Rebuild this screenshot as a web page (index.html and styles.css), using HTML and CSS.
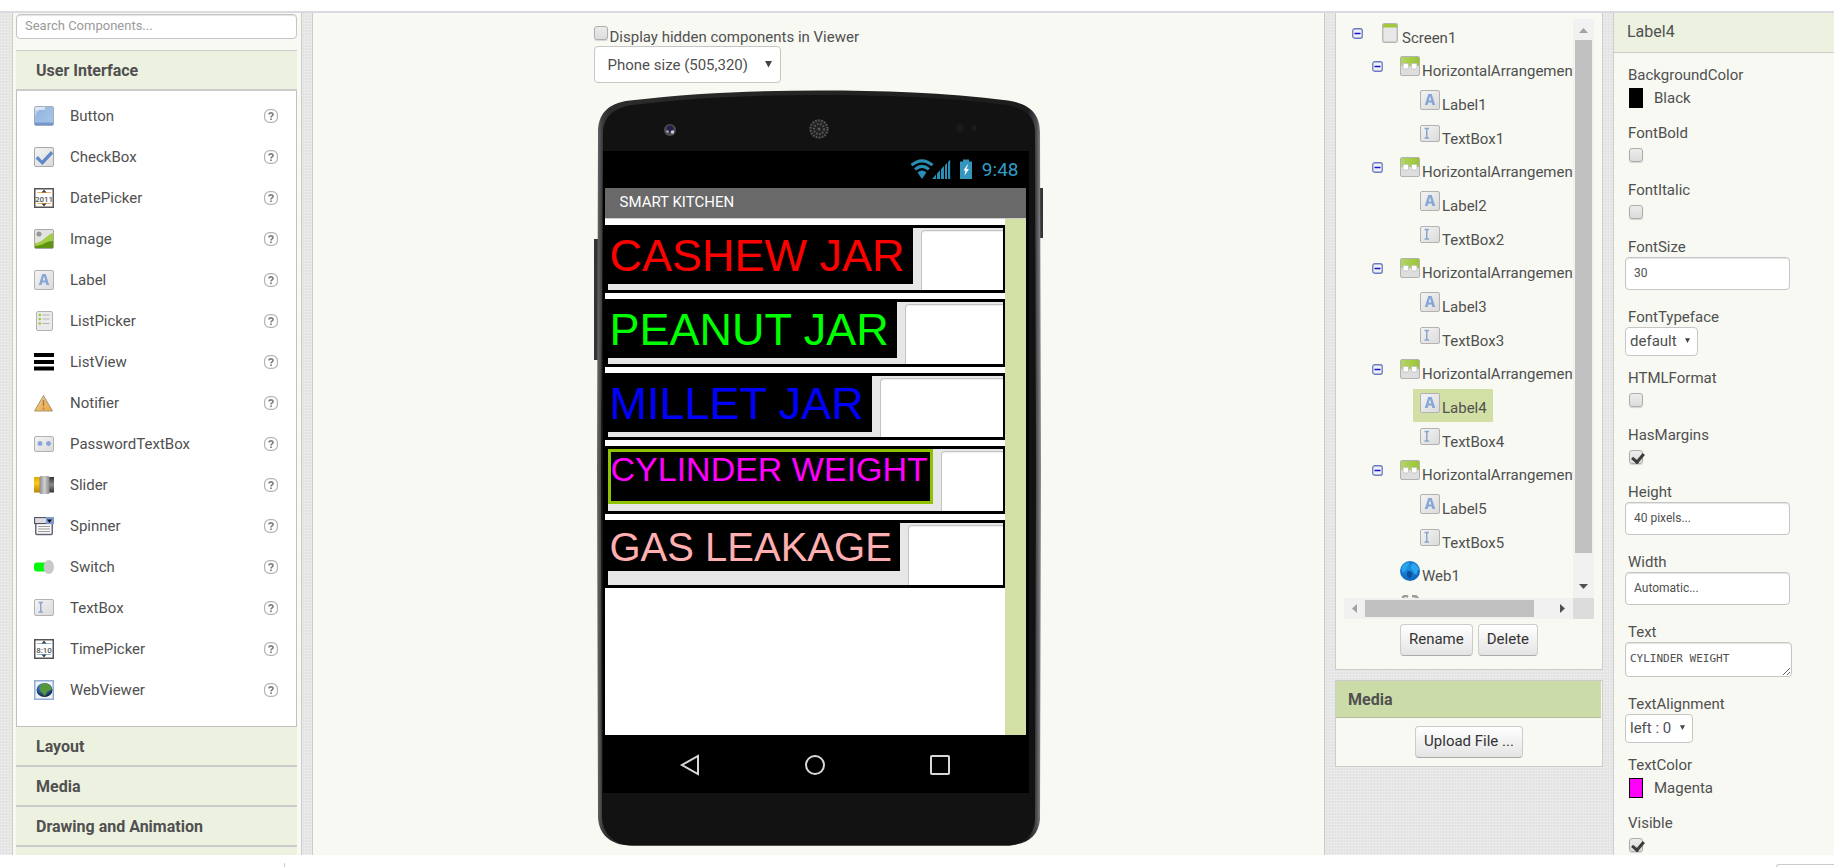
FILE: index.html
```html
<!DOCTYPE html>
<html lang="en">
<head>
<meta charset="utf-8">
<title>Designer</title>
<link rel="stylesheet" href="styles.css">
</head>
<body>
<svg class="sprite" width="0" height="0" aria-hidden="true">
  <defs>
    <linearGradient id="gBlue" x1="0" y1="0" x2="1" y2="1"><stop offset="0" stop-color="#8fb0dc"/><stop offset=".5" stop-color="#9dbde4"/><stop offset="1" stop-color="#a9c5e8"/></linearGradient>
    <linearGradient id="gGrey" x1="0" y1="0" x2="1" y2="1"><stop offset="0" stop-color="#f4f4f4"/><stop offset="1" stop-color="#dadada"/></linearGradient>
    <linearGradient id="gGreen" x1="0" y1="0" x2="1" y2="0"><stop offset="0" stop-color="#b2d566"/><stop offset="1" stop-color="#9cc434"/></linearGradient>
    <linearGradient id="gWarn" x1="0" y1="0" x2="1" y2="1"><stop offset="0" stop-color="#e8d29a"/><stop offset="1" stop-color="#f0a23a"/></linearGradient>
    <linearGradient id="gYellow" x1="0" y1="0" x2="0" y2="1"><stop offset="0" stop-color="#e0a800"/><stop offset=".4" stop-color="#ffc81e"/><stop offset="1" stop-color="#b88600"/></linearGradient>
    <linearGradient id="gKnob" x1="0" y1="0" x2="1" y2="0"><stop offset="0" stop-color="#8c8c8c"/><stop offset=".5" stop-color="#cfcfcf"/><stop offset="1" stop-color="#888"/></linearGradient>
    <linearGradient id="gDark" x1="0" y1="0" x2="0" y2="1"><stop offset="0" stop-color="#333"/><stop offset=".5" stop-color="#8a8a8a"/><stop offset="1" stop-color="#333"/></linearGradient>
    <radialGradient id="gWorld" cx=".45" cy=".3" r=".7"><stop offset="0" stop-color="#6aa0dc"/><stop offset=".6" stop-color="#2c5a94"/><stop offset="1" stop-color="#0c1c30"/></radialGradient>
    <radialGradient id="gWeb" cx=".4" cy=".35" r=".7"><stop offset="0" stop-color="#1f92e2"/><stop offset="1" stop-color="#0a62ba"/></radialGradient>
    <linearGradient id="gEdge" x1="0" y1="0" x2="1" y2="0"><stop offset="0" stop-color="#6a6c6e"/><stop offset=".012" stop-color="#3a3b3d"/><stop offset=".03" stop-color="#2b2b2c"/><stop offset=".97" stop-color="#1c1c1d"/><stop offset=".99" stop-color="#4a4b4d"/><stop offset="1" stop-color="#8a8c8e"/></linearGradient>
  </defs>
  <symbol id="i-button" viewBox="0 0 20 20"><rect x=".5" y=".5" width="19" height="19" rx="1.5" fill="url(#gBlue)" stroke="#a3aebd"/><path d="M1 11C2 6 6 2 14 1H1z" fill="#c3d6ef"/><path d="M1 1h10v3H1z" fill="#e6eefa" opacity=".7"/><path d="M1 16.500h18V19H1z" fill="#7397cd"/></symbol>
  <symbol id="i-checkbox" viewBox="0 0 20 20"><rect x=".5" y=".5" width="19" height="19" rx="1.500" fill="url(#gGrey)" stroke="#a9a9a9"/><path d="M1.500 11.500L4 9l4 4.500L17 4l2.200 2.500L8.500 18z" fill="#5f88c6"/></symbol>
  <symbol id="i-picker" viewBox="0 0 20 20"><rect x=".75" y=".75" width="18.500" height="18.500" fill="#fff" stroke="#555" stroke-width="1.500"/><path d="M3 4.500h14M3 15.500h14" stroke="currentColor" stroke-width="1.200"/><path d="M7.500 4.500l2.500-3 2.500 3zM7.500 15.500l2.500 3 2.500-3z" fill="#444"/></symbol>
  <symbol id="i-image" viewBox="0 0 20 20"><rect x=".5" y=".5" width="19" height="19" rx="1.500" fill="#e2e2e2" stroke="#a9a9a9"/><circle cx="5" cy="5" r="2.500" fill="#969696"/><path d="M1 14c7 0 10-7 18-10v15H1z" fill="#a4cc45"/><path d="M1 17c7 0 11-5 18-5v7H1z" fill="#5f9413"/></symbol>
  <symbol id="i-label" viewBox="0 0 20 20"><rect x=".5" y=".5" width="19" height="19" rx="1.500" fill="url(#gGrey)" stroke="#b2b2b2"/><path d="M4.800 15L8.300 4h3.400L15.200 15h-2.800l-.7-2.500H8.300L7.600 15zM8.700 10.500h2.600L10 6z" fill="#85a6d6" fill-rule="evenodd"/></symbol>
  <symbol id="i-listpicker" viewBox="0 0 20 20"><rect x="2.500" y=".5" width="16" height="19" rx="1.500" fill="#eaeaea" stroke="#b2b2b2"/><path d="M8.500 4h7M8.500 8h7M8.500 12.500h7" stroke="#b5b5b5" stroke-width="1.200"/><circle cx="5.800" cy="4" r="1.300" fill="#9cc93c"/><circle cx="5.800" cy="8" r="1.300" fill="#9cc93c"/><circle cx="5.800" cy="12.500" r="1.300" fill="#9cc93c"/></symbol>
  <symbol id="i-listview" viewBox="0 0 20 20"><path d="M0 3h20M0 10h20M0 16.500h20" stroke="#000" stroke-width="4"/></symbol>
  <symbol id="i-notifier" viewBox="0 0 20 20"><path d="M9.500 2.500L18.500 18H.5z" fill="url(#gWarn)" stroke="#a89878"/><path d="M9.500 7v6M9.500 14.500v2" stroke="#a08050" stroke-width="1.500"/></symbol>
  <symbol id="i-password" viewBox="0 0 20 20"><rect x=".5" y="2.500" width="19" height="15" rx="1.500" fill="url(#gGrey)" stroke="#b2b2b2"/><path d="M6 7v5M3.500 9.500h5M4.200 7.700l3.600 3.600M7.800 7.700l-3.600 3.600M14.500 7v5M12 9.500h5M12.700 7.700l3.600 3.600M16.300 7.700l-3.600 3.600" stroke="#86a5d4" stroke-width="1.300"/></symbol>
  <symbol id="i-slider" viewBox="0 0 20 20"><path d="M0 2h7v15.500H0z" fill="url(#gYellow)"/><path d="M14 2h6v15.500h-6z" fill="url(#gDark)"/><rect x="5.500" y="1" width="10" height="18" rx="1.500" fill="url(#gKnob)"/></symbol>
  <symbol id="i-spinner" viewBox="0 0 20 20"><rect x="1.750" y="7" width="16.500" height="11.500" rx="1" fill="#fafafa" stroke="#667" stroke-width="1.500"/><path d="M4 10.500h12M4 13h12M4 15.500h12" stroke="#999"/><rect x=".6" y="1.600" width="18.800" height="6" fill="#dcdde4" stroke="#445"/><path d="M12 1h8v7h-8z" fill="#7f9bd0"/><path d="M13 3.500h5L15.500 7z" fill="#111"/></symbol>
  <symbol id="i-switch" viewBox="0 0 20 20"><rect x="0" y="5.500" width="16" height="9" rx="3" fill="#00f80a"/><ellipse cx="14.800" cy="10" rx="5.200" ry="7" fill="#c9c9c9"/></symbol>
  <symbol id="i-textbox" viewBox="0 0 20 20"><rect x=".5" y="1.500" width="19" height="16" rx="1.500" fill="url(#gGrey)" stroke="#b2b2b2"/><path d="M4.500 4.500H9M4.500 14H9M6.750 4.500V14" stroke="#8ba6cd" stroke-width="1.500"/></symbol>
  <symbol id="i-webviewer" viewBox="0 0 20 20"><rect x=".75" y=".75" width="18.500" height="18.500" fill="#f3f3f3" stroke="#8fadd8" stroke-width="1.500"/><ellipse cx="10.500" cy="10" rx="8" ry="7" fill="url(#gWorld)"/><path d="M8 4c4-2 9 1 10 5-1 2-4 1-5 3s-1 3-3 4C9 13 8 12 6 11c1-3-1-4 2-7z" fill="#58963a"/></symbol>
  <symbol id="i-screen" viewBox="0 0 20 20"><rect x="2.750" y=".75" width="14.500" height="18.500" rx="1.500" fill="#e8e8e8" stroke="#b4b4b4" stroke-width="1.300"/><path d="M3 1h14v3.500H3z" fill="#a6c63e"/></symbol>
  <symbol id="i-harr" viewBox="0 0 20 20"><rect x=".5" y=".5" width="19" height="19" rx="1.500" fill="#dedede" stroke="#b2b2b2"/><path d="M1 1h18v9H1z" fill="url(#gGreen)"/><rect x="3" y="7.500" width="5.500" height="5.500" rx="1.200" fill="#fff" stroke="#c6c6c6"/><rect x="11.500" y="7.500" width="5.500" height="5.500" rx="1.200" fill="#fff" stroke="#c6c6c6"/></symbol>
  <symbol id="i-web" viewBox="0 0 20 20"><circle cx="10" cy="10" r="10" fill="url(#gWeb)"/><path d="M3 4c2-2 5-3 6-2s-1 2-2 4-1 2-2 4-2 1-3 0c-1-2 0-4 1-6zM13 2c3 1 5 3 6 6-2 1-1 4-3 6-2-1-2-3-4-5-2-2-1-5 1-7z" fill="#2aa6ee"/><path d="M8 10c3 0 5 2 4 4s-1 4-3 3-3-5-1-7z" fill="#0b4f9e"/></symbol>
  <symbol id="i-clock" viewBox="0 0 20 20"><path d="M2 2.500l4-2 2 1.500M12 1l4 .5 2 2" fill="none" stroke="#9a9a9a" stroke-width="2.500"/><circle cx="10" cy="11" r="7.500" fill="#eee" stroke="#999"/></symbol>
  <symbol id="i-help" viewBox="0 0 14 14"><rect x=".6" y=".6" width="12.800" height="12.800" rx="5" fill="#fff" stroke="#b4b4b4" stroke-width="1.200"/><path d="M5 5.600C5 3.400 9 3.400 9 5.400 9 7 7 6.800 7 8.400" fill="none" stroke="#808080" stroke-width="1.700"/><path d="M6.100 9.400h1.800v1.600H6.100z" fill="#808080"/></symbol>
  <symbol id="i-minus" viewBox="0 0 11 11"><rect x=".75" y=".75" width="9.500" height="9.500" rx="2" fill="#eef0f6" stroke="#6b7bbd" stroke-width="1.300"/><path d="M2.500 5.500h6" stroke="#1414c8" stroke-width="1.500"/></symbol>
</svg>

<main class="workspace">
  <aside class="panel palette">
    <input class="search" type="text" placeholder="Search Components..." aria-label="Search Components">
    <button class="category first">User Interface</button>
    <ul class="items">
      <li><svg class="icon"><use href="#i-button"/></svg><span>Button</span><svg class="help"><use href="#i-help"/></svg></li>
      <li><svg class="icon"><use href="#i-checkbox"/></svg><span>CheckBox</span><svg class="help"><use href="#i-help"/></svg></li>
      <li><svg class="icon orange" viewBox="0 0 20 20"><use href="#i-picker"/><text x="10" y="13.500" text-anchor="middle" class="glyph">2011</text></svg><span>DatePicker</span><svg class="help"><use href="#i-help"/></svg></li>
      <li><svg class="icon"><use href="#i-image"/></svg><span>Image</span><svg class="help"><use href="#i-help"/></svg></li>
      <li><svg class="icon"><use href="#i-label"/></svg><span>Label</span><svg class="help"><use href="#i-help"/></svg></li>
      <li><svg class="icon"><use href="#i-listpicker"/></svg><span>ListPicker</span><svg class="help"><use href="#i-help"/></svg></li>
      <li><svg class="icon"><use href="#i-listview"/></svg><span>ListView</span><svg class="help"><use href="#i-help"/></svg></li>
      <li><svg class="icon"><use href="#i-notifier"/></svg><span>Notifier</span><svg class="help"><use href="#i-help"/></svg></li>
      <li><svg class="icon"><use href="#i-password"/></svg><span>PasswordTextBox</span><svg class="help"><use href="#i-help"/></svg></li>
      <li><svg class="icon"><use href="#i-slider"/></svg><span>Slider</span><svg class="help"><use href="#i-help"/></svg></li>
      <li><svg class="icon"><use href="#i-spinner"/></svg><span>Spinner</span><svg class="help"><use href="#i-help"/></svg></li>
      <li><svg class="icon"><use href="#i-switch"/></svg><span>Switch</span><svg class="help"><use href="#i-help"/></svg></li>
      <li><svg class="icon"><use href="#i-textbox"/></svg><span>TextBox</span><svg class="help"><use href="#i-help"/></svg></li>
      <li><svg class="icon sky" viewBox="0 0 20 20"><use href="#i-picker"/><text x="10" y="13.500" text-anchor="middle" class="glyph">8:10</text></svg><span>TimePicker</span><svg class="help"><use href="#i-help"/></svg></li>
      <li><svg class="icon"><use href="#i-webviewer"/></svg><span>WebViewer</span><svg class="help"><use href="#i-help"/></svg></li>
    </ul>
    <button class="category">Layout</button>
    <button class="category">Media</button>
    <button class="category">Drawing and Animation</button>
    <div class="category"></div>
  </aside>

  <section class="panel viewer">
    <div class="stage">
      <div class="hidden-toggle"><input class="check" type="checkbox" id="hidden"><label for="hidden">Display hidden components in Viewer</label></div>
      <span class="drop drop-large"><select aria-label="Phone size"><option>Phone size (505,320)</option></select><svg class="arrow" viewBox="0 0 8 8"><path d="M0 .5h8L4 8z"/></svg></span>
      <div class="phone">
        <svg class="shell" viewBox="0 0 450 757" preserveAspectRatio="none" aria-hidden="true">
          <rect x="0" y="149" width="6" height="121" fill="#333436"/><rect x="444" y="98" width="5" height="50" fill="#333436"/>
          <path d="M4 42C4 26 12 13 36 10.500C100 2.500 165 .5 226 .5S350 2.500 414 10.500C438 14 446 26 446 42L447 380 446 730C444 746 434 755 412 755.500H36C16 755 5 744 4 728L3 380z" fill="url(#gEdge)"/>
          <path d="M9 42C10 26 20 18 38 15C100 7 165 5 226 5S350 7 412 15C430 18 441 26 441 42L442 380 441 730C440 745 430 755 412 755.500H38C20 755 9 744 8 728L7 380z" fill="#121212"/>
          <circle cx="76" cy="40" r="6" fill="#4c4c4e"/><circle cx="76" cy="39" r="3.500" fill="#20204a"/><circle cx="78.500" cy="42" r="1.800" fill="#c8c8d8"/><circle cx="73.500" cy="41.500" r="1.300" fill="#a8a8b8"/>
          <circle cx="225" cy="39" r="10" fill="#222"/><circle cx="225" cy="39" r="8.500" fill="none" stroke="#5a5a5a" stroke-width="2" stroke-dasharray="1.500 1.500"/><circle cx="225" cy="39" r="5" fill="none" stroke="#5a5a5a" stroke-width="2" stroke-dasharray="1.500 1.500"/><circle cx="225" cy="39" r="1.500" fill="#5a5a5a"/>
          <circle cx="366" cy="38" r="4" fill="#1b1b1b"/><circle cx="380" cy="38" r="3" fill="#1b1b1b"/>
        </svg>
        <div class="screen">
          <div class="status">
            <svg class="status-icons" viewBox="0 0 63 21"><g fill="none" stroke="#2a8db4" stroke-width="3"><path d="M1.500 6.200Q12 -2.500 22.500 6.200"/><path d="M5 10.300Q12 4.500 19 10.300"/></g><path d="M7.500 13.500Q12 9.500 16.500 13.500L12 20z" fill="#2a8db4"/><path d="M22 20l4-4.500V20zM27 20v-5.500l3-3.300V20zM31 20V10.200l3-3.200v13zM35 20V6l2-2v16zM38 20V3l2.200-2.300V20z" fill="#2a8db4"/><path d="M50 2.500h3V.5h6v2h3V20H50z" fill="#3596bd"/><path d="M57.500 5.500l-4 6h2l-1 5 4.500-6.500h-2.500l1.500-4.500z" fill="#fff"/></svg>
            <span>9:48</span>
          </div>
          <div class="app">
            <div class="titlebar">SMART KITCHEN</div>
            <div class="canvas">
              <div class="rows">
                <div class="arr"><div class="lbl red">CASHEW JAR</div><div class="tb"></div></div>
                <div class="arr"><div class="lbl green">PEANUT JAR</div><div class="tb"></div></div>
                <div class="arr short"><div class="lbl blue">MILLET JAR</div><div class="tb"></div></div>
                <div class="arr"><div class="lbl magenta">CYLINDER WEIGHT</div><div class="tb"></div></div>
                <div class="arr"><div class="lbl pink">GAS LEAKAGE</div><div class="tb"></div></div>
              </div>
            </div>
          </div>
          <div class="nav">
            <svg viewBox="0 0 22 22"><path d="M19 2v18L3 11z"/></svg>
            <svg viewBox="0 0 22 22"><circle cx="11" cy="11" r="9"/></svg>
            <svg viewBox="0 0 22 22"><rect x="2" y="2" width="18" height="18" rx="1"/></svg>
          </div>
        </div>
      </div>
    </div>
  </section>

  <div class="side">
    <section class="panel components">
      <div class="scroller">
        <ul class="tree">
          <li class="d0 last"><svg class="tog"><use href="#i-minus"/></svg><span class="node"><svg class="icon"><use href="#i-screen"/></svg>Screen1</span></li>
          <li class="d1"><svg class="tog"><use href="#i-minus"/></svg><span class="node"><svg class="icon"><use href="#i-harr"/></svg>HorizontalArrangement1</span></li>
          <li class="d2"><span class="node"><svg class="icon"><use href="#i-label"/></svg>Label1</span></li>
          <li class="d2 last"><span class="node"><svg class="icon"><use href="#i-textbox"/></svg>TextBox1</span></li>
          <li class="d1"><svg class="tog"><use href="#i-minus"/></svg><span class="node"><svg class="icon"><use href="#i-harr"/></svg>HorizontalArrangement2</span></li>
          <li class="d2"><span class="node"><svg class="icon"><use href="#i-label"/></svg>Label2</span></li>
          <li class="d2 last"><span class="node"><svg class="icon"><use href="#i-textbox"/></svg>TextBox2</span></li>
          <li class="d1"><svg class="tog"><use href="#i-minus"/></svg><span class="node"><svg class="icon"><use href="#i-harr"/></svg>HorizontalArrangement3</span></li>
          <li class="d2"><span class="node"><svg class="icon"><use href="#i-label"/></svg>Label3</span></li>
          <li class="d2 last"><span class="node"><svg class="icon"><use href="#i-textbox"/></svg>TextBox3</span></li>
          <li class="d1"><svg class="tog"><use href="#i-minus"/></svg><span class="node"><svg class="icon"><use href="#i-harr"/></svg>HorizontalArrangement4</span></li>
          <li class="d2"><span class="node selected"><svg class="icon"><use href="#i-label"/></svg>Label4</span></li>
          <li class="d2 last"><span class="node"><svg class="icon"><use href="#i-textbox"/></svg>TextBox4</span></li>
          <li class="d1"><svg class="tog"><use href="#i-minus"/></svg><span class="node"><svg class="icon"><use href="#i-harr"/></svg>HorizontalArrangement5</span></li>
          <li class="d2"><span class="node"><svg class="icon"><use href="#i-label"/></svg>Label5</span></li>
          <li class="d2 last"><span class="node"><svg class="icon"><use href="#i-textbox"/></svg>TextBox5</span></li>
          <li class="d1 leaf"><span class="node"><svg class="icon"><use href="#i-web"/></svg>Web1</span></li>
          <li class="d1 leaf"><span class="node"><svg class="icon"><use href="#i-clock"/></svg></span></li>
        </ul>
        <div class="vbar"><svg viewBox="0 0 21 21"><path d="M6 14l4.500-5L15 14z" fill="#a3a3a3"/></svg><div class="thumb"></div><svg viewBox="0 0 21 21"><path d="M6 7l4.500 5L15 7z" fill="#505050"/></svg></div>
        <div class="hbar"><svg viewBox="0 0 21 21"><path d="M13 6l-5 4.500 5 4.500z" fill="#a3a3a3"/></svg><div class="thumb"></div><svg viewBox="0 0 21 21"><path d="M8 6l5 4.500L8 15z" fill="#505050"/></svg></div>
        <div class="corner"></div>
      </div>
      <div class="actions"><button class="btn">Rename</button><button class="btn">Delete</button></div>
    </section>
    <section class="panel media">
      <h2>Media</h2>
      <div class="actions"><button class="btn">Upload File ...</button></div>
    </section>
  </div>

  <aside class="properties">
    <h2>Label4</h2>
    <div class="props">
      <div class="prop color"><div class="name">BackgroundColor</div><button class="swatch-row"><i class="swatch black"></i>Black</button></div>
      <div class="prop tick"><label class="name" for="p1">FontBold</label><input class="check" type="checkbox" id="p1"></div>
      <div class="prop tick"><label class="name" for="p2">FontItalic</label><input class="check" type="checkbox" id="p2"></div>
      <div class="prop field"><label class="name" for="p3">FontSize</label><input class="text" type="text" id="p3" value="30"></div>
      <div class="prop pick"><label class="name" for="p4">FontTypeface</label><span class="drop"><select id="p4"><option>default</option></select><svg class="arrow" viewBox="0 0 8 8"><path d="M0 .5h8L4 8z"/></svg></span></div>
      <div class="prop tick"><label class="name" for="p5">HTMLFormat</label><input class="check" type="checkbox" id="p5"></div>
      <div class="prop tick"><label class="name" for="p6">HasMargins</label><input class="check" type="checkbox" id="p6" checked></div>
      <div class="prop field"><label class="name" for="p7">Height</label><input class="text" type="text" id="p7" value="40 pixels..."></div>
      <div class="prop field"><label class="name" for="p8">Width</label><input class="text" type="text" id="p8" value="Automatic..."></div>
      <div class="prop field"><label class="name" for="p9">Text</label><textarea id="p9" rows="1">CYLINDER WEIGHT</textarea></div>
      <div class="prop pick"><label class="name" for="p10">TextAlignment</label><span class="drop"><select id="p10"><option>left : 0</option></select><svg class="arrow" viewBox="0 0 8 8"><path d="M0 .5h8L4 8z"/></svg></span></div>
      <div class="prop color"><div class="name">TextColor</div><button class="swatch-row"><i class="swatch fuchsia"></i>Magenta</button></div>
      <div class="prop tick"><label class="name" for="p11">Visible</label><input class="check" type="checkbox" id="p11" checked></div>
    </div>
  </aside>
</main>
<footer class="shelf"><span class="divider"></span><span class="chip"></span></footer>
</body>
</html>
```

FILE: styles.css
```css
* { box-sizing: border-box; }
html, body { height: 100%; }
body {
  margin: 0;
  display: flex;
  flex-direction: column;
  overflow: hidden;
  padding-top: 11px;
  background: #fff;
  color: #505050;
  font: 15px/20px Roboto, "Liberation Sans", sans-serif;
}
button, input, select, textarea { font: inherit; color: inherit; margin: 0; }
ul { list-style: none; margin: 0; padding: 0; }
h2 { margin: 0; }
.sprite { position: absolute; }
.glyph { font: 500 8px Roboto, sans-serif; fill: #555; }
.icon { width: 20px; height: 20px; flex: none; }
.orange { color: #f2b565; }
.sky { color: #8fbbe0; }

.workspace {
  flex: 1;
  min-height: 0;
  display: flex;
  gap: 10px;
  padding-left: 12px;
  border-top: 2px solid #dadbe0;
  overflow: hidden;
  background-color: #e6e6e6;
  background-image:
    repeating-linear-gradient(0deg, rgba(255,255,255,.25) 0 1px, transparent 1px 3px),
    repeating-linear-gradient(90deg, rgba(0,0,0,.02) 0 1px, transparent 1px 3px);
}
.panel { background: #f8f9f3; border: 1px solid #ccc; }

.palette {
  flex: 0 0 290px;
  display: flex;
  flex-direction: column;
  padding: 1px 4px 0 3px;
  border-width: 0 1px;
}
.search {
  height: 25px;
  flex: none;
  margin-bottom: 11px;
  padding: 0 8px 2px;
  border: 1px solid #c4c4c4;
  border-radius: 4px;
  background: #fff;
  box-shadow: inset 0 1px 1px #e4e4e4;
  font-size: 13px;
}
.search::placeholder { color: #9a9a9a; }
.category {
  flex: none;
  height: 40px;
  padding: 2px 20px 0;
  border: 0;
  border-bottom: 2px solid #ccc;
  background: #edf2e0;
  text-align: left;
  font-size: 16px;
  font-weight: 700;
}
.category.first { height: 41px; border-top: 1px solid #ccc; }
.items {
  flex: none;
  padding: 4px 18px 16px 17px;
  border: 1px solid #c0c0c0;
  border-top: 0;
  background: #fff;
}
.items li { display: flex; align-items: center; height: 41px; }
.items span { flex: 1; margin-left: 16px; }
.help { width: 14px; height: 14px; }

.viewer { flex: 1; min-width: 0; border-width: 0 1px; }
.stage { width: 450px; margin: 0 auto; }
.hidden-toggle { display: flex; align-items: flex-end; gap: 2px; height: 33px; }
.hidden-toggle .check { margin-bottom: 6px; }
.hidden-toggle label { line-height: 18px; }
.check {
  appearance: none;
  display: block;
  width: 14px;
  height: 14px;
  border: 1px solid #adadad;
  border-radius: 3px;
  background: linear-gradient(#ececec, #dcdcdc);
  box-shadow: 0 1px 1px #d4d4d4;
}
.check:checked { position: relative; }
.check:checked::after {
  content: "";
  position: absolute;
  left: 4px;
  top: 0;
  width: 5px;
  height: 9px;
  border: solid #3c3c3c;
  border-width: 0 3px 3px 0;
  transform: rotate(40deg);
}
.drop { position: relative; display: inline-block; vertical-align: top; }
.drop select {
  display: block;
  appearance: none;
  height: 29px;
  padding: 0 20px 2px 4px;
  border: 1px solid #c6c6c6;
  border-radius: 4px;
  background: #fff;
}
.drop .arrow { position: absolute; right: 8px; top: 11px; width: 5px; height: 5px; fill: #444; pointer-events: none; }
.drop-large select { height: 37px; padding: 0 31px 0 13px; }
.drop-large .arrow { right: 9px; top: 14px; width: 7px; height: 8px; }

.phone { position: relative; margin-top: 7px; padding: 61px 15px 54px 9px; }
.shell { position: absolute; inset: 0; width: 100%; height: 100%; }
.screen { position: relative; background: #000; }
.status {
  display: flex;
  justify-content: flex-end;
  align-items: center;
  gap: 9px;
  height: 37px;
  padding-right: 10px;
  color: #2f9dc8;
  font-size: 19px;
}
.status-icons { width: 63px; height: 21px; }
.app { margin: 0 3px 0 2px; }
.titlebar {
  height: 31px;
  padding: 0 15px;
  border-bottom: 1px solid #ccc;
  background: #696969;
  color: #fff;
  line-height: 29px;
}
.canvas { height: 516px; padding-right: 21px; background: #d2e0a5; }
.rows {
  height: 100%;
  display: flex;
  flex-direction: column;
  gap: 6px;
  padding-top: 6px;
  background: #fff;
}
.arr {
  display: flex;
  align-items: flex-start;
  gap: 8px;
  height: 68px;
  border: solid #000;
  border-width: 3px 2px 3px 3px;
  background: #e7e7e7;
}
.arr.short { height: 67px; }
.lbl {
  padding: 0 8px 0 2px;
  background: #000;
  font: 45px/56px "Liberation Sans", Arial, sans-serif;
  white-space: nowrap;
}
.tb {
  flex: 1;
  align-self: stretch;
  margin-top: 2px;
  border: solid #c4c4c4;
  border-width: 1px 0 0 1px;
  border-radius: 4px 0 0 0;
  background: #fff;
  box-shadow: inset 0 1px 1px #eee;
}
.red { color: #f00; }
.green { color: #0f0; }
.blue { color: #00f; }
.magenta { height: 55px; padding: 0 2px 0 0; border: 3px solid #8fc202; color: #f0f; font-size: 34px; line-height: 34px; }
.pink { color: #ffafaf; font-size: 40px; line-height: 48px; }
.nav { display: flex; justify-content: space-around; align-items: center; height: 58px; padding: 2px 26px 0 25px; }
.nav svg { width: 22px; height: 22px; fill: none; stroke: #d8d8d8; stroke-width: 2; }

.side { flex: 0 0 268px; display: flex; flex-direction: column; gap: 10px; }
.components { padding: 6px 8px 13px; border-top: 0; }
.scroller { display: grid; grid-template: 579px 21px / 1fr 21px; }
.tree { min-width: 0; overflow: hidden; }
.tree li { display: flex; height: 34px; line-height: 39px; }
.tree li.last { height: 33px; }
.tog { width: 11px; height: 11px; flex: none; margin-top: 9px; }
.node { display: flex; gap: 2px; height: 33px; padding: 0 6px 0 7px; white-space: nowrap; }
.node .icon { margin-top: 4px; }
.d0 { padding-left: 8px; }
.d0 .node { margin-left: 10px; }
.d1 { padding-left: 28px; }
.d1 .node { margin-left: 10px; }
.d1.leaf { padding-left: 39px; }
.d2 { padding-left: 69px; }
.selected { background: #d2e0a5; }
.vbar, .hbar { display: flex; background: #f1f1f1; }
.vbar { flex-direction: column; }
.vbar svg, .hbar svg { width: 21px; height: 21px; flex: none; }
.thumb { background: #c1c1c1; }
.vbar .thumb { flex: 0 0 513px; margin: 0 2px auto; }
.hbar .thumb { flex: 0 0 169px; margin: 2px auto 2px 0; }
.corner { background: #dcdcdc; }
.actions { display: flex; justify-content: center; gap: 5px; padding-top: 5px; }
.btn {
  height: 32px;
  padding: 0 8px 2px;
  border: 1px solid #ccc;
  border-bottom-color: #aaa;
  border-radius: 4px;
  background: linear-gradient(#fff, #e4e4e4);
  color: #333;
}
.media { padding-bottom: 8px; }
.media h2 {
  height: 37px;
  margin-right: 1px;
  padding: 0 12px;
  border-bottom: 1px solid #b4bf9c;
  background: #ccdca9;
  font-size: 16px;
  font-weight: 700;
  line-height: 37px;
}
.media .actions { padding-top: 8px; }

.properties { flex: 0 0 221px; background: #f8f9f3; border-left: 1px solid #ccc; }
.properties h2 {
  height: 40px;
  padding: 0 13px;
  border-bottom: 1px solid #ccc;
  background: #edf2e0;
  font-size: 16px;
  font-weight: 400;
  line-height: 37px;
}
.props { padding: 12px 11px 0; }
.name { display: block; height: 20px; padding-left: 3px; }
.tick .check { margin: 5px 4px 18px; }
.field { margin-bottom: 17px; }
.pick { margin-bottom: 12px; }
.color { margin-bottom: 13px; }
.swatch-row { display: flex; align-items: center; gap: 11px; height: 25px; padding: 0 4px; border: 0; background: none; }
.swatch { width: 14px; height: 20px; border: 1px solid #000; }
.black { background: #000; }
.fuchsia { background: #f0f; }
.text, textarea {
  display: block;
  width: 165px;
  height: 33px;
  padding: 0 8px 2px;
  border: 1px solid #c6c6c6;
  border-radius: 4px;
  background: #fff;
  box-shadow: inset 0 1px 1px #e4e4e4;
  font-size: 12px;
}
textarea {
  width: 167px;
  height: 35px;
  padding: 7px 4px;
  font: 11px/18px "DejaVu Sans Mono", monospace;
  overflow: hidden;
}
.shelf { flex: none; display: flex; justify-content: space-between; align-items: flex-end; height: 12px; padding-left: 284px; }
.divider { width: 1px; height: 4px; background: #ccc; }
.chip { width: 58px; height: 3px; border: solid #ccc; border-width: 1px 0 0 1px; border-radius: 3px 0 0 0; }
```
